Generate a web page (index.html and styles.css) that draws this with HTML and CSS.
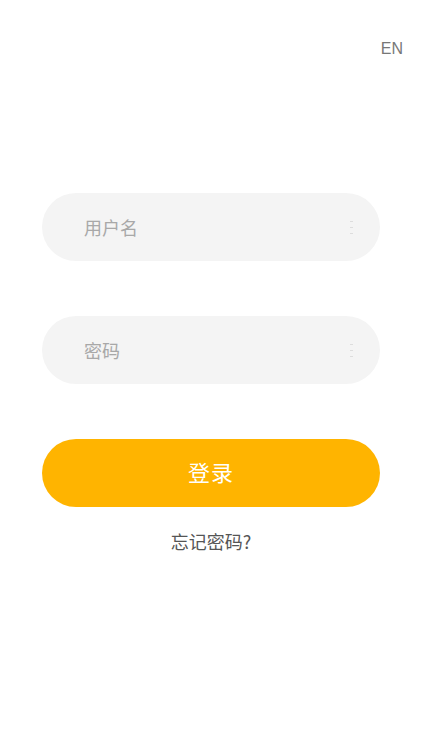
FILE: index.html
```html
<!DOCTYPE html>
<html lang="zh">
<head>
<meta charset="utf-8">
<link rel="stylesheet" href="styles.css">
</head>
<body>
<div class="page">
  <div class="topbar"><span class="lang">EN</span></div>
  <form class="form">
    <div class="field">
      <span class="placeholder">用户名</span>
      <span class="mark"><i></i><i></i><i></i></span>
    </div>
    <div class="field">
      <span class="placeholder">密码</span>
      <span class="mark"><i></i><i></i><i></i></span>
    </div>
    <div class="btn">登录</div>
    <div class="forgot">忘记密码?</div>
  </form>
</div>
</body>
</html>
```
FILE: styles.css
```css
* { box-sizing: border-box; }
html, body { margin: 0; padding: 0; background: #fff; }
body {
  font-family: "Noto Sans CJK SC", "Noto Sans", sans-serif;
  width: 422px;
  height: 750px;
  overflow: hidden;
}
.page { display: flex; flex-direction: column; }
.topbar {
  display: flex;
  justify-content: flex-end;
  padding: 39px 19px 0 0;
  height: 60px;
}
.lang {
  font-family: "Liberation Sans", Arial, sans-serif;
  font-size: 16px;
  color: #777;
  line-height: 20px;
}
.form {
  display: flex;
  flex-direction: column;
  padding: 133px 42px 0 42px;
  margin: 0;
}
.field {
  height: 68px;
  border-radius: 34px;
  background: #f4f4f4;
  display: flex;
  align-items: center;
  padding: 0 26px 0 42px;
  margin-bottom: 55px;
}
.placeholder {
  flex: 1;
  font-size: 18px;
  color: #a8a8a8;
  line-height: 24px;
}
.mark {
  display: flex;
  flex-direction: column;
  align-items: center;
  gap: 5px;
  width: 6px;
}
.mark i {
  display: block;
  width: 3px;
  height: 1px;
  background: #ddd;
}
.btn {
  height: 68px;
  border-radius: 34px;
  background: #ffb400;
  color: #fff;
  font-size: 22px;
  line-height: 28px;
  display: flex;
  align-items: center;
  justify-content: center;
  letter-spacing: 1px;
  padding-bottom: 4px;
}
.forgot {
  margin-top: 22px;
  text-align: center;
  font-size: 18px;
  color: #555;
  line-height: 24px;
}
```
